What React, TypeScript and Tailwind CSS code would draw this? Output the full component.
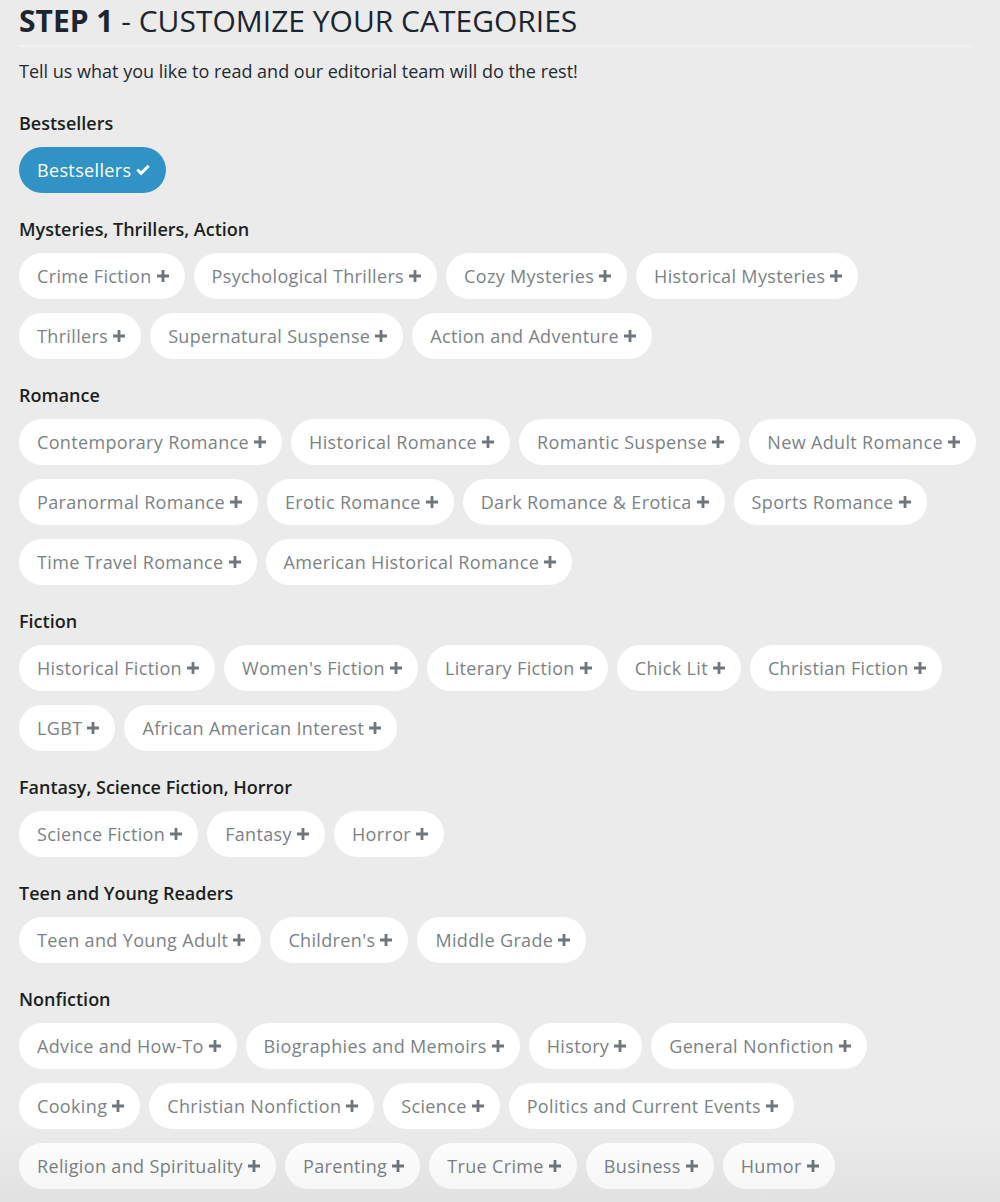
import { Fragment } from 'react'

interface Section {
  title: string
  items: string[]
  selected?: string[]
}

const SECTIONS: Section[] = [
  { title: 'Bestsellers', items: ['Bestsellers'], selected: ['Bestsellers'] },
  {
    title: 'Mysteries, Thrillers, Action',
    items: [
      'Crime Fiction',
      'Psychological Thrillers',
      'Cozy Mysteries',
      'Historical Mysteries',
      'Thrillers',
      'Supernatural Suspense',
      'Action and Adventure',
    ],
  },
  {
    title: 'Romance',
    items: [
      'Contemporary Romance',
      'Historical Romance',
      'Romantic Suspense',
      'New Adult Romance',
      'Paranormal Romance',
      'Erotic Romance',
      'Dark Romance & Erotica',
      'Sports Romance',
      'Time Travel Romance',
      'American Historical Romance',
    ],
  },
  {
    title: 'Fiction',
    items: [
      'Historical Fiction',
      "Women's Fiction",
      'Literary Fiction',
      'Chick Lit',
      'Christian Fiction',
      'LGBT',
      'African American Interest',
    ],
  },
  {
    title: 'Fantasy, Science Fiction, Horror',
    items: ['Science Fiction', 'Fantasy', 'Horror'],
  },
  {
    title: 'Teen and Young Readers',
    items: ['Teen and Young Adult', "Children's", 'Middle Grade'],
  },
  {
    title: 'Nonfiction',
    items: [
      'Advice and How-To',
      'Biographies and Memoirs',
      'History',
      'General Nonfiction',
      'Cooking',
      'Christian Nonfiction',
      'Science',
      'Politics and Current Events',
      'Religion and Spirituality',
      'Parenting',
      'True Crime',
      'Business',
      'Humor',
    ],
  },
]

const PlusIcon = () => (
  <svg viewBox="0 0 12 12" className="w-[12px] h-[12px] shrink-0" fill="#6f767b">
    <path d="M4.6 0h2.8v4.6H12v2.8H7.4V12H4.6V7.4H0V4.6h4.6z" />
  </svg>
)

const CheckIcon = () => (
  <svg viewBox="0 0 14 12" className="w-[14px] h-[12px] shrink-0" fill="#ffffff">
    <path d="M5.1 11.4 0.3 6.6l2.1-2.1 2.7 2.7L11.6 0.7l2.1 2.1z" />
  </svg>
)

const Pill = ({ label, active }: { label: string; active: boolean }) => (
  <button
    className={`h-[46px] pl-[18px] pr-[16px] rounded-full flex items-center gap-[5px] text-[18px] leading-none tracking-[0.35px] ${
      active ? 'bg-[#3193c5] text-white' : 'bg-white text-[#7b8287]'
    }`}
  >
    <span>{label}</span>
    {active ? <CheckIcon /> : <PlusIcon />}
  </button>
)

export default function App() {
  return (
    <div
      className="relative min-h-[1202px] bg-[#ebebeb] px-[19px] pt-[2px] overflow-hidden"
      style={{ fontFamily: '"Open Sans", "Noto Sans", sans-serif' }}
    >
      <h1 className="text-[30px] leading-[38px] text-[#1b2530] pb-[5px] border-b-2 border-[#f2f2f2] mr-[10px]">
        <span className="font-bold">STEP 1</span> - CUSTOMIZE YOUR CATEGORIES
      </h1>
      <p className="mt-[12px] text-[18px] leading-[24px] text-[#1f2a33]">
        Tell us what you like to read and our editorial team will do the rest!
      </p>
      <div className="mt-[28px] flex flex-col gap-[24px]">
        {SECTIONS.map((section) => (
          <Fragment key={section.title}>
            <div>
              <h2 className="text-[18px] leading-[24px] font-semibold text-[#1c1f22]">{section.title}</h2>
              <div className="mt-[12px] flex flex-wrap gap-x-[9px] gap-y-[14px]">
                {section.items.map((item) => (
                  <Pill key={item} label={item} active={!!section.selected?.includes(item)} />
                ))}
              </div>
            </div>
          </Fragment>
        ))}
      </div>
      <div className="pointer-events-none absolute left-0 right-0 bottom-0 h-[80px] bg-gradient-to-b from-transparent to-black/[0.04]" />
    </div>
  )
}
